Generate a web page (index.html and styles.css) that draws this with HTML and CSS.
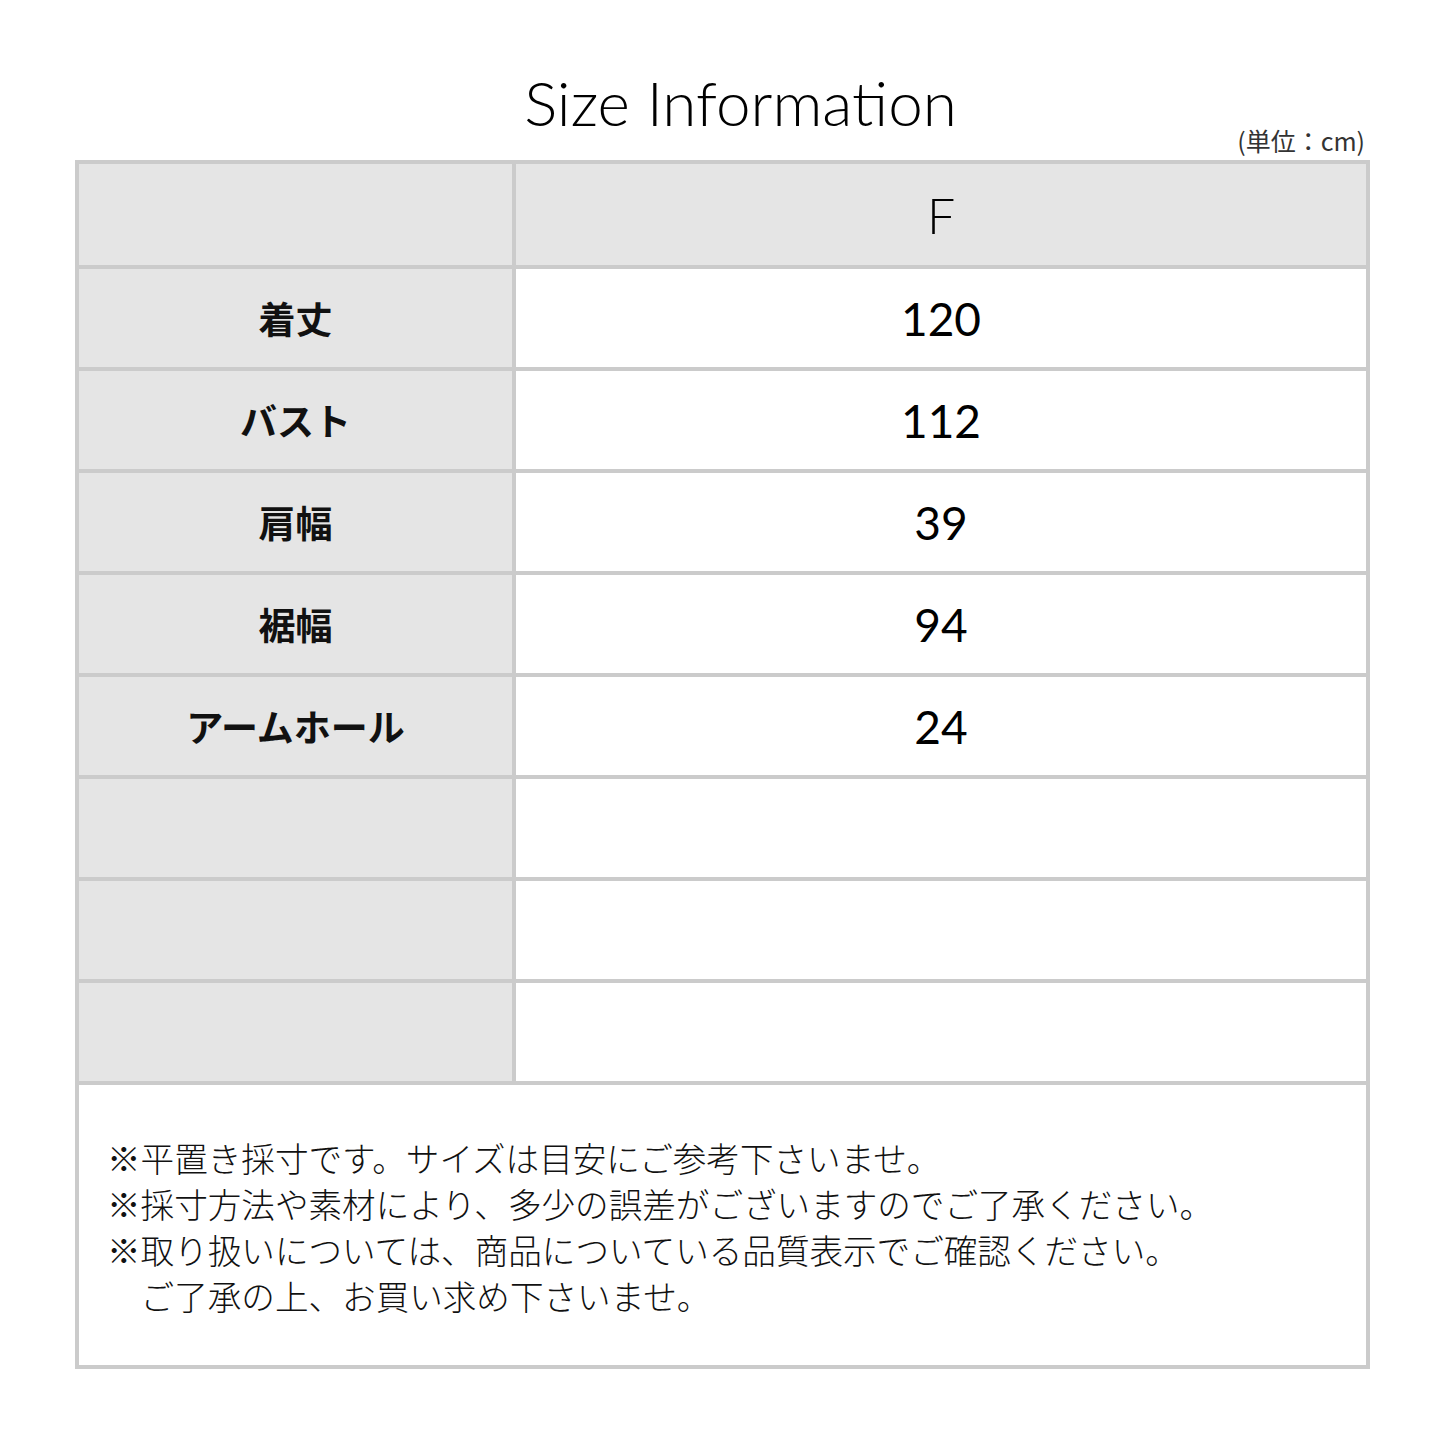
FILE: index.html
```html
<!DOCTYPE html>
<html lang="ja">
<head>
<meta charset="utf-8">
<title>Size Information</title>
<link rel="stylesheet" href="styles.css">
</head>
<body>
<main class="sheet">
  <header class="head">
    <h1 class="title">Size Information</h1>
    <div class="unit">(単位：cm)</div>
  </header>
  <section class="box">
    <div class="grid">
      <div class="cell label head-row"></div>
      <div class="cell value head-row head-value">F</div>
      <div class="cell label">着丈</div>
      <div class="cell value">120</div>
      <div class="cell label">バスト</div>
      <div class="cell value">112</div>
      <div class="cell label">肩幅</div>
      <div class="cell value">39</div>
      <div class="cell label">裾幅</div>
      <div class="cell value">94</div>
      <div class="cell label">アームホール</div>
      <div class="cell value">24</div>
      <div class="cell label"></div>
      <div class="cell value"></div>
      <div class="cell label"></div>
      <div class="cell value"></div>
      <div class="cell label"></div>
      <div class="cell value"></div>
    </div>
    <div class="notes">
      <p>※平置き採寸です。サイズは目安にご参考下さいませ。</p>
      <p>※採寸方法や素材により、多少の誤差がございますのでご了承ください。</p>
      <p>※取り扱いについては、商品についている品質表示でご確認ください。</p>
      <p>　ご了承の上、お買い求め下さいませ。</p>
    </div>
  </section>
</main>
</body>
</html>
```

FILE: styles.css
```css
html, body {
  margin: 0;
  padding: 0;
  background: #ffffff;
}

.sheet {
  width: 1295px;
  margin: 0 auto;
  padding-top: 74px;
  color: #111111;
}

.head {
  display: flex;
  flex-direction: column;
}

.title {
  margin: 0;
  text-align: center;
  font-family: "Lato", "Noto Sans", sans-serif;
  font-weight: 300;
  font-size: 62px;
  line-height: 56px;
  height: 56px;
  padding-left: 36px;
  color: #000000;
}

.unit {
  align-self: flex-end;
  margin-right: 5px;
  font-family: "Noto Sans CJK JP", "Noto Sans", sans-serif;
  font-size: 25px;
  line-height: 26px;
  color: #333333;
  margin-top: -3px;
  margin-bottom: 7px;
}

.box {
  border: 4px solid #cbcbcb;
  background: #ffffff;
}

.grid {
  display: grid;
  grid-template-columns: 433px 1fr;
  grid-template-rows: 101px repeat(8, 98px);
  gap: 4px;
  background: #cbcbcb;
  border-bottom: 4px solid #cbcbcb;
}

.cell {
  display: flex;
  align-items: center;
  justify-content: center;
}

.label {
  background: #e5e5e5;
  font-family: "Noto Sans CJK JP", sans-serif;
  font-weight: 700;
  font-size: 37px;
  color: #111111;
}

.value {
  background: #ffffff;
  font-family: "Lato", "Noto Sans", sans-serif;
  font-weight: 400;
  font-size: 46px;
  color: #000000;
}

.head-value {
  background: #e5e5e5;
  font-size: 50px;
  font-weight: 300;
}

.notes {
  height: 280px;
  box-sizing: border-box;
  padding: 50px 0 0 28px;
  font-family: "Noto Sans CJK JP", sans-serif;
  font-weight: 300;
  font-size: 33.6px;
  line-height: 46px;
  color: #111111;
}

.notes p {
  margin: 0;
  white-space: pre;
}
```
